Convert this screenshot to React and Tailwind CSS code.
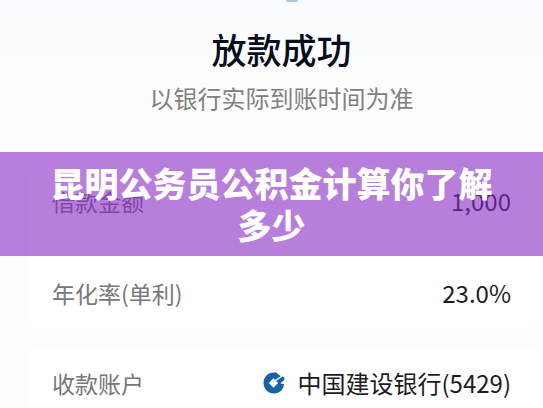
import React from "react";

function BankLogo() {
    return (
        <svg viewBox="0 0 42 42" className="h-[22px] w-[22px] shrink-0" aria-hidden="true">
            <path
                fill="#1762a5"
                fillRule="evenodd"
                d="M21 1C9 1 1 10 1 21C1 32 10 41 21 41C32 41 40 33 40 22L41 11L31 3C28 2 25 1 21 1ZM20 12L29 21L20 30L11 21Z"
            />
            <path stroke="#fff" strokeWidth="2.5" fill="none" d="M27 1L36 8L24 16" />
            <path fill="#fff" d="M33 22L42 14V23Z" />
        </svg>
    );
}

function Row({ label, children }) {
    return (
        <div className="flex items-center justify-between leading-9">
            <dt className="text-[23px] text-[#777777]">{label}</dt>
            <dd className="flex items-center gap-3 text-2xl leading-9 text-[#1c1c20]">{children}</dd>
        </div>
    );
}

export default function App() {
    return (
        <main className="relative h-screen overflow-hidden bg-[#fdfdfe] font-['Noto_Sans_CJK_SC',sans-serif]">
            <header className="bg-linear-to-b from-[#f8fbff] to-[#fdfdfe] to-50% pb-12 text-center">
                <div className="flex justify-center pl-10">
                    <div className="h-0.5 w-3 rounded-b-full bg-[#a9c3ea]" />
                </div>
                <div className="pt-[22px] pl-5">
                    <h1 className="text-[35px] leading-[50px] font-medium text-[#090d1b]">
                        放款成功
                    </h1>
                    <p className="mt-1 text-2xl leading-10 text-[#808080]">
                        以银行实际到账时间为准
                    </p>
                </div>
            </header>

            <div className="flex flex-col gap-5 pr-1 pl-7">
                <dl className="flex flex-col gap-14 rounded-xl bg-white py-[17px] pr-7 pl-6">
                    <Row label="借款金额">1,000</Row>
                    <Row label="年化率(单利)">23.0%</Row>
                </dl>
                <dl className="rounded-xl bg-white py-[17px] pr-7 pl-6">
                    <Row label="收款账户">
                        <BankLogo />
                        中国建设银行(5429)
                    </Row>
                </dl>
            </div>

            <div className="absolute inset-x-0 top-1/2 -translate-y-1/2 bg-[#8728c5]/60 px-10 py-2.5 text-center">
                <h2 className="text-[34px] leading-[42px] font-black text-white">
                    昆明公务员公积金计算你了解多少
                </h2>
            </div>
        </main>
    );
}
